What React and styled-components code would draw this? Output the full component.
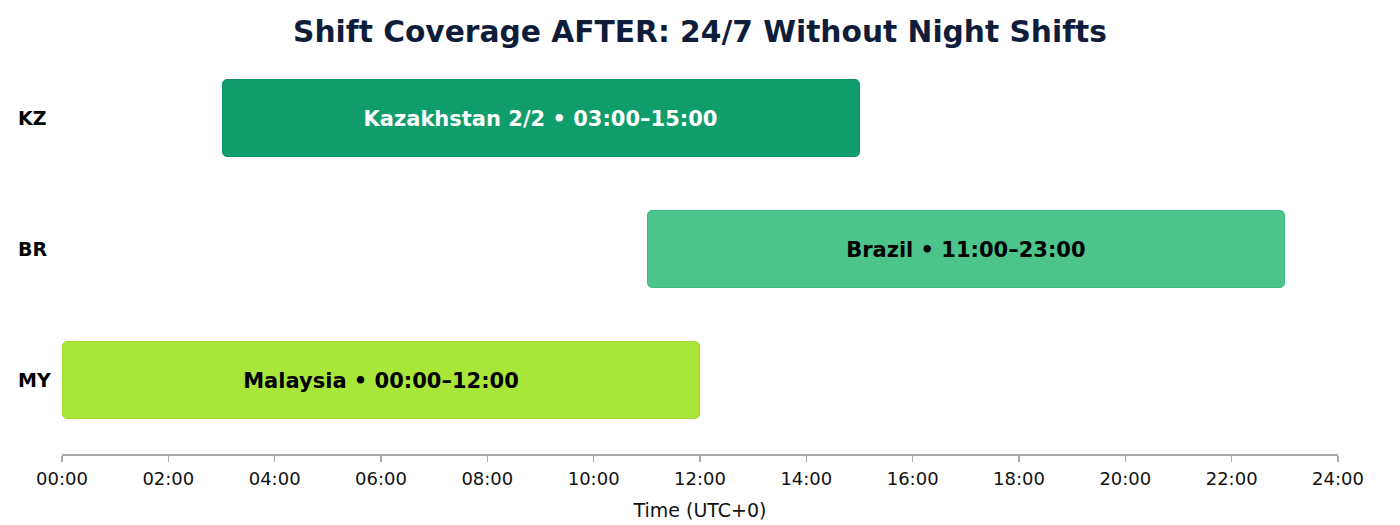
import React from 'react';
import styled, { createGlobalStyle } from 'styled-components';

const GlobalStyle = createGlobalStyle`
  html, body {
    margin: 0;
    padding: 0;
    background: #ffffff;
  }
  body {
    font-family: "DejaVu Sans", "Liberation Sans", sans-serif;
  }
`;

const SHIFTS = [
  { code: 'KZ', label: 'Kazakhstan 2/2 • 03:00–15:00', start: 3, end: 15, bg: '#109d6c', border: '#0e9264', color: '#ffffff' },
  { code: 'BR', label: 'Brazil • 11:00–23:00', start: 11, end: 23, bg: '#4cc48b', border: '#3fbb7f', color: '#000000' },
  { code: 'MY', label: 'Malaysia • 00:00–12:00', start: 0, end: 12, bg: '#a9e63a', border: '#9edc30', color: '#000000' },
];

const TICKS = [0, 2, 4, 6, 8, 10, 12, 14, 16, 18, 20, 22, 24];

const Page = styled.div`
  width: 1400px;
  height: 525px;
  display: flex;
  flex-direction: column;
  overflow: hidden;
`;

const Title = styled.h1`
  margin: 0;
  padding-top: 12px;
  height: 40px;
  line-height: 40px;
  text-align: center;
  font-size: 29.7px;
  font-weight: bold;
  color: #0f1d3a;
`;

const Chart = styled.div`
  display: grid;
  grid-template-columns: 62px 1276px;
`;

const RowLabel = styled.div`
  height: 131px;
  display: flex;
  align-items: center;
  padding-left: 18px;
  padding-top: 1px;
  box-sizing: border-box;
  font-size: 19px;
  font-weight: bold;
  color: #000;
`;

const Track = styled.div`
  height: 131px;
  display: flex;
  align-items: center;
`;

const Bar = styled.div`
  box-sizing: border-box;
  height: 78px;
  padding-top: 2px;
  border-radius: 5px;
  border: 1px solid ${(p) => p.$border};
  background: ${(p) => p.$bg};
  color: ${(p) => p.$color};
  display: flex;
  align-items: center;
  justify-content: center;
  font-size: 21px;
  font-weight: bold;
  white-space: nowrap;
`;

const AxisArea = styled.div`
  grid-column: 2;
  margin-top: 9px;
  position: relative;
  height: 70px;
  border-top: 2px solid #aaaaaa;
`;

const Tick = styled.div`
  position: absolute;
  top: 0;
  width: 0;
  display: flex;
  flex-direction: column;
  align-items: center;
`;

const TickMark = styled.div`
  width: 1.5px;
  height: 6px;
  background: #aaaaaa;
`;

const TickLabel = styled.div`
  margin-top: 6px;
  font-size: 18px;
  line-height: 22px;
  color: #111;
  white-space: nowrap;
`;

const AxisTitle = styled.div`
  position: absolute;
  left: 0;
  right: 0;
  top: 42px;
  text-align: center;
  font-size: 19px;
  line-height: 24px;
  color: #111;
`;

const pad = (h) => `${String(h).padStart(2, '0')}:00`;

export default function App() {
  return (
    <Page>
      <GlobalStyle />
      <Title>Shift Coverage AFTER: 24/7 Without Night Shifts</Title>
      <Chart>
        {SHIFTS.map((s) => (
          <React.Fragment key={s.code}>
            <RowLabel>{s.code}</RowLabel>
            <Track>
              <Bar
                $bg={s.bg}
                $border={s.border}
                $color={s.color}
                style={{
                  marginLeft: `${(s.start / 24) * 100}%`,
                  width: `${((s.end - s.start) / 24) * 100}%`,
                }}
              >
                {s.label}
              </Bar>
            </Track>
          </React.Fragment>
        ))}
        <AxisArea>
          {TICKS.map((t) => (
            <Tick key={t} style={{ left: `${(t / 24) * 100}%` }}>
              <TickMark />
              <TickLabel>{pad(t)}</TickLabel>
            </Tick>
          ))}
          <AxisTitle>Time (UTC+0)</AxisTitle>
        </AxisArea>
      </Chart>
    </Page>
  );
}
